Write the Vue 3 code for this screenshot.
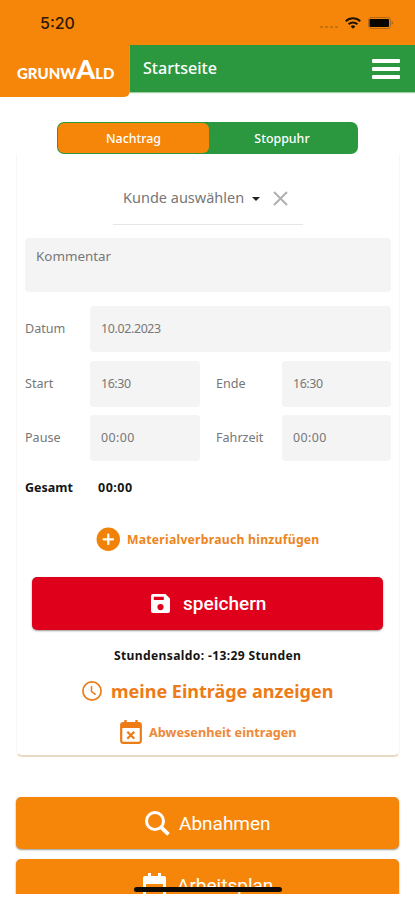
<script setup>
import { ref } from 'vue'

const tab = ref('Nachtrag')
const tabs = ['Nachtrag', 'Stoppuhr']
const rows = [
  [{ label: 'Start', value: '16:30' }, { label: 'Ende', value: '16:30' }],
  [{ label: 'Pause', value: '00:00' }, { label: 'Fahrzeit', value: '00:00' }],
]
</script>

<template>
  <div class="screen">
    <div class="status">
      <span class="time">5:20</span>
      <div class="indicators">
        <span class="dots"><i v-for="n in 4" :key="n"></i></span>
        <svg class="wifi" width="16" height="12" viewBox="0 0 16 12">
          <g fill="none" stroke="#201307" stroke-width="2">
            <path d="M.8 4.3a10.3 10.3 0 0 1 14.4 0" />
            <path d="M3.6 7.2a6.3 6.3 0 0 1 8.8 0" />
          </g>
          <path d="M5.7 9.4a3.3 3.3 0 0 1 4.6 0L8 11.8z" fill="#201307" />
        </svg>
        <svg class="battery" width="27" height="12" viewBox="0 0 27 12">
          <rect x=".5" y=".5" width="22" height="11" rx="2.5" fill="none" stroke="#b86a14" />
          <rect x="1.5" y="2" width="19.5" height="8" rx="1" fill="#080400" />
          <path d="M23.7 4q2.4 2 0 4z" fill="#9a5b16" />
        </svg>
      </div>
    </div>

    <header class="header">
      <div class="logo"><span>GRUNW</span><span class="peak">A</span><span>LD</span></div>
      <div class="bar">
        <span class="title">Startseite</span>
        <span class="menu"><i></i><i></i><i></i></span>
      </div>
    </header>

    <div class="tabs">
      <div v-for="t in tabs" :key="t" class="tab" :class="{ active: t === tab }" @click="tab = t"><span>{{ t }}</span></div>
    </div>

    <main class="card">
      <div class="customer">
        <span class="customer-text">Kunde auswählen</span>
        <i class="caret"></i>
        <svg width="15" height="15" viewBox="0 0 15 15" fill="none" stroke="#b0b0b0" stroke-width="2"><path d="M1 1l13 13M14 1L1 14" /></svg>
      </div>
      <div class="comment">Kommentar</div>
      <div class="fields">
        <label>Datum</label>
        <div class="input date">10.02.2023</div>
        <template v-for="(row, i) in rows" :key="i">
          <template v-for="f in row" :key="f.label">
            <label>{{ f.label }}</label>
            <div class="input" :class="{ zero: f.value === '00:00' }">{{ f.value }}</div>
          </template>
        </template>
      </div>
      <div class="total"><span class="total-label">Gesamt</span><span class="total-value">00:00</span></div>

      <div class="material">
        <svg width="24" height="24" viewBox="0 0 24 24"><circle cx="12.3" cy="12.3" r="11.7" fill="#f18208" /><path d="M12.3 7.6v9.4M7.6 12.3h9.4" stroke="#fff" stroke-width="2.2" stroke-linecap="round" /></svg>
        <span>Materialverbrauch hinzufügen</span>
      </div>

      <div class="save">
        <svg width="19" height="19" viewBox="0 0 19 19"><path fill="#fff" fill-rule="evenodd" d="M2 0h12.5L19 4.5V17a2 2 0 0 1-2 2H2a2 2 0 0 1-2-2V2a2 2 0 0 1 2-2zm.8 2.8v3.2h10V2.8zM9.5 10a3.1 3.1 0 1 0 0 6.2 3.1 3.1 0 0 0 0-6.2z" /></svg>
        <span>speichern</span>
      </div>

      <div class="saldo">Stundensaldo: -13:29 Stunden</div>

      <div class="entries">
        <svg width="20" height="20" viewBox="0 0 20 20" fill="none" stroke="#ed7b16"><circle cx="10" cy="10" r="9.1" stroke-width="1.7" /><path d="M9.5 5v5.5l4.2 3.1" stroke-width="1.5" /></svg>
        <span>meine Einträge anzeigen</span>
      </div>

      <div class="absence">
        <svg width="22" height="24" viewBox="0 0 22 24"><path d="M5.5 0v5M16.5 0v5" stroke="#ed7b16" stroke-width="2.4" /><rect x="1.2" y="3.2" width="19.6" height="19.6" rx="2" fill="none" stroke="#ed7b16" stroke-width="2.2" /><path fill="#ed7b16" d="M1 3h20v5H1z" /><path d="M7.3 11.7l7 7M14.3 11.7l-7 7" stroke="#ed7b16" stroke-width="2.2" /></svg>
        <span>Abwesenheit eintragen</span>
      </div>
    </main>

    <div class="action first">
      <svg width="26" height="25" viewBox="0 0 26 25" fill="none" stroke="#fff"><circle cx="11" cy="10" r="8.5" stroke-width="3" /><path d="M16.8 16l7.7 7.3" stroke-width="3.8" /></svg>
      <span>Abnahmen</span>
    </div>
    <div class="action second">
      <svg width="23" height="25" viewBox="0 0 23 25"><path fill="#fff" fill-rule="evenodd" d="M5 0h3v3h7V0h3v3h3a2 2 0 0 1 2 2v18a2 2 0 0 1-2 2H2a2 2 0 0 1-2-2V5a2 2 0 0 1 2-2h3zM3 11v11h17V11z" /></svg>
      <span>Arbeitsplan</span>
    </div>
    <div class="home"></div>
  </div>
</template>

<style>
body { background: #fff; overflow: hidden; }
</style>

<style scoped>
.screen {
  position: relative;
  box-sizing: border-box;
  width: 415px;
  height: 894px;
  overflow: hidden;
  background: #fff;
  color: #777;
  font-family: "Noto Sans", sans-serif;
  font-size: 13px;
  white-space: nowrap;
}
span, label { display: block; }
svg { display: block; flex: none; }
.status {
  display: flex;
  justify-content: space-between;
  height: 45px;
  padding: 0 20px 0 40px;
  box-sizing: border-box;
  background: #f6860a;
}
.time { padding-top: 13px; font: 500 16px/20px Inter, sans-serif; color: #2c1905; }
.indicators { display: flex; align-items: flex-start; padding-top: 17px; }
.dots { display: flex; gap: 2px; padding-top: 9px; margin-right: 7px; }
.dots i { width: 3px; height: 2px; border-radius: 1px; background: #bd700f; }
.wifi { margin-right: 7px; }
.header { display: flex; height: 53px; align-items: flex-start; }
.logo {
  display: flex;
  align-items: baseline;
  box-sizing: border-box;
  width: 130px;
  height: 52px;
  padding: 10px 0 0 17px;
  border-radius: 0 0 6px 0;
  background: #f6860a;
  color: #fff;
  font: 900 15px/28px Lato, sans-serif;
}
.peak { font-size: 27px; }
.bar {
  display: flex;
  flex: 1;
  justify-content: space-between;
  box-sizing: border-box;
  height: 47px;
  padding: 0 15px 0 13px;
  background: #2b973f;
  box-shadow: 0 1px 1px #9fcfa7;
}
.title { color: #fff; font-size: 16.1px; font-weight: 500; line-height: 46px; }
.menu { display: flex; flex-direction: column; gap: 4px; padding-top: 14px; }
.menu i { width: 28px; height: 4px; background: #fff; border-radius: 1px; }
.tabs {
  display: flex;
  box-sizing: border-box;
  width: 301px;
  height: 32px;
  margin: 24px 0 0 57px;
  padding: 1px;
  border-radius: 7px;
  background: #2b973f;
}
.tab { flex: 1; border-radius: 6px; text-align: center; color: #fff; font-size: 12.4px; font-weight: 500; line-height: 31px; }
.tab:last-child { padding-right: 2px; }
.tab.active { flex: 0 0 151px; background: #f6860a; }
.card {
  box-sizing: border-box;
  width: 384px;
  height: 603px;
  margin: 0 0 0 16px;
  padding: 25px 8px 0;
  border: solid #f9f7f3;
  border-width: 0 1px 2px;
  border-bottom-color: #ead9c3;
  border-radius: 0 0 6px 6px;
}
.customer {
  display: flex;
  align-items: center;
  box-sizing: border-box;
  width: 190px;
  height: 46px;
  margin-left: 88px;
  padding: 0 0 6px 10px;
  border-bottom: 1px solid #e6e6e6;
}
.customer-text { font-size: 14.5px; width: 122px; margin-top: -3px; }
.caret { margin: 1px 13px 0 7px; border: 4px solid transparent; border-top-color: #222; border-bottom: 0; }
.comment {
  box-sizing: border-box;
  width: 366px;
  height: 54px;
  margin-top: 13px;
  padding: 9px 11px;
  border-radius: 4px;
  background: #f4f4f4;
  font-size: 13.4px;
  line-height: 18px;
}
.fields {
  display: grid;
  grid-template-columns: 65px 110px 82px 109px;
  grid-auto-rows: 46px;
  row-gap: 8.5px;
  margin-top: 14px;
  line-height: 46px;
}
.fields label { font-size: 12.6px; }
.input { padding-left: 11px; border-radius: 4px; background: #f4f4f4; font-size: 12.4px; letter-spacing: -.4px; }
.input.zero { letter-spacing: .4px; }
.date { grid-column: 2 / 5; letter-spacing: -.35px; }
.fields label:nth-of-type(odd):not(:first-child) { padding-left: 16px; }
.total { display: flex; height: 20px; margin-top: 17px; color: #151515; font-size: 12.5px; font-weight: 700; line-height: 20px; }
.total-label { width: 73px; }
.total-value { letter-spacing: .5px; }
.material, .save, .entries, .absence, .action { display: flex; align-items: center; }
.material { gap: 7px; height: 24px; margin: 29px 0 0 71px; color: #ed8420; font-size: 12.2px; font-weight: 700; letter-spacing: .25px; }
.save {
  gap: 13px;
  box-sizing: border-box;
  width: 351px;
  height: 53px;
  margin: 26px 0 0 7px;
  padding-left: 119px;
  border-radius: 5px;
  background: #df001b;
  box-shadow: 0 1px 2px #999;
  color: #fff;
  font: 500 19px Roboto, sans-serif;
}
.saldo { margin: 16px 0 0 89px; color: #151515; font-size: 12.1px; font-weight: 700; line-height: 20px; letter-spacing: .35px; }
.entries { gap: 9px; height: 24px; margin: 13px 0 0 57px; color: #ed7b16; font-size: 18px; font-weight: 700; }
.absence { gap: 7px; height: 26px; margin: 16px 0 0 95px; color: #ed8938; font-size: 12.7px; font-weight: 700; }
.action {
  box-sizing: border-box;
  width: 383px;
  height: 52px;
  margin-left: 16px;
  border-radius: 5px;
  background: #f6860a;
  box-shadow: 0 1px 2px #999;
  color: #fff;
  font: 400 19px Roboto, sans-serif;
}
.first { gap: 9px; margin-top: 40px; padding-left: 128px; }
.second { gap: 11px; margin-top: 10px; padding-left: 127px; }
.home { position: absolute; left: 134px; top: 887px; width: 148px; height: 5px; border-radius: 3px; background: #120b04; }
</style>
